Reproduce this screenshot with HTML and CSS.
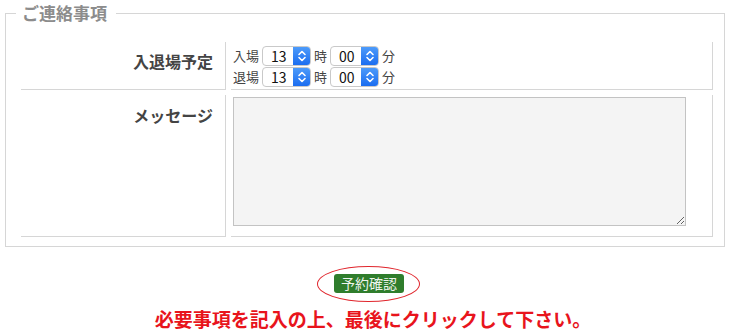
FILE: index.html
```html
<!DOCTYPE html>
<html lang="ja">
<head>
    <meta charset="UTF-8">
    <title>ご連絡事項</title>
    <link rel="stylesheet" href="styles.css">
</head>
<body>

    <fieldset class="contact">
        <legend>ご連絡事項</legend>
        <table class="form-table">
            <tr>
                <th class="mid">入退場予定</th>
                <td class="time-cell">
                    <div class="time-row">
                        <span>入場</span>
                        <span class="pick"><span class="pick-val">13</span><span class="pick-btn"><svg width="10" height="14" viewBox="0 0 10 14"><path d="M2 5.5 L5 2.5 L8 5.5 M2 8.5 L5 11.5 L8 8.5" fill="none" stroke="#fff" stroke-width="1.6" stroke-linecap="round" stroke-linejoin="round"/></svg></span></span>
                        <span>時</span>
                        <span class="pick"><span class="pick-val">00</span><span class="pick-btn"><svg width="10" height="14" viewBox="0 0 10 14"><path d="M2 5.5 L5 2.5 L8 5.5 M2 8.5 L5 11.5 L8 8.5" fill="none" stroke="#fff" stroke-width="1.6" stroke-linecap="round" stroke-linejoin="round"/></svg></span></span>
                        <span>分</span>
                    </div>
                    <div class="time-row">
                        <span>退場</span>
                        <span class="pick"><span class="pick-val">13</span><span class="pick-btn"><svg width="10" height="14" viewBox="0 0 10 14"><path d="M2 5.5 L5 2.5 L8 5.5 M2 8.5 L5 11.5 L8 8.5" fill="none" stroke="#fff" stroke-width="1.6" stroke-linecap="round" stroke-linejoin="round"/></svg></span></span>
                        <span>時</span>
                        <span class="pick"><span class="pick-val">00</span><span class="pick-btn"><svg width="10" height="14" viewBox="0 0 10 14"><path d="M2 5.5 L5 2.5 L8 5.5 M2 8.5 L5 11.5 L8 8.5" fill="none" stroke="#fff" stroke-width="1.6" stroke-linecap="round" stroke-linejoin="round"/></svg></span></span>
                        <span>分</span>
                    </div>
                </td>
            </tr>
            <tr>
                <th class="top">メッセージ</th>
                <td class="msg-cell"><textarea class="message"></textarea></td>
            </tr>
        </table>
    </fieldset>

    <div class="submit-area">
        <span class="ring"><button class="confirm">予約確認</button></span>
    </div>
    <p class="notice">必要事項を記入の上、最後にクリックして下さい。</p>

</body>
</html>
```

FILE: styles.css
```css
body {
    margin: 0;
    padding: 0 4px 0 5px;
    font-family: "Noto Sans CJK JP", sans-serif;
    color: #444;
    background: #fff;
}
.contact {
    margin: 0;
    padding: 0 6px 4px 10px;
    border: 1px solid #d6d6d6;
}
.contact legend {
    padding: 0 9px 0 6px;
    font-size: 17px;
    line-height: 26px;
    font-weight: bold;
    color: #8c8c8c;
}
.form-table {
    border-collapse: separate;
    border-spacing: 5px;
    margin-top: 11px;
}
.form-table th,
.form-table td {
    border-right: 1px solid #d6d6d6;
    border-bottom: 1px solid #d6d6d6;
}
.form-table th {
    width: 193px;
    padding: 0 12px 0 0;
    text-align: right;
    font-size: 16px;
    font-weight: bold;
    color: #444;
}
.form-table th.mid {
    vertical-align: middle;
    padding-bottom: 9px;
}
.form-table th.top {
    vertical-align: top;
    padding-top: 8px;
}
.time-cell {
    width: 478px;
    padding: 3px 0 2px 2px;
}
.time-row {
    display: flex;
    align-items: center;
    height: 21px;
    font-size: 13px;
}
.time-row > span {
    line-height: 20px;
}
.pick {
    display: flex;
    width: 49px;
    height: 20px;
    margin: 0 3px;
    box-sizing: border-box;
    border: 1px solid #c9c9c9;
    border-radius: 4px;
    background: #fff;
    overflow: hidden;
}
.pick-val {
    flex: 1;
    padding-left: 8px;
    font-size: 14px;
    line-height: 18px;
    color: #111;
}
.pick-btn {
    display: flex;
    align-items: center;
    justify-content: center;
    width: 17px;
    background: linear-gradient(#4d9bfa, #1b6df0);
}
.msg-cell {
    padding: 2px 26px 10px 2px;
}
.message {
    display: block;
    width: 453px;
    height: 129px;
    box-sizing: border-box;
    margin: 0;
    border: 1px solid #c3c3c3;
    background: #f4f4f4;
}
.submit-area {
    text-align: center;
    padding-left: 7px;
    margin-top: 19px;
}
.ring {
    display: inline-block;
    padding: 7px 15px 8px 16px;
    border: 1px solid #e0262d;
    border-radius: 50%;
}
.confirm {
    display: block;
    height: 19px;
    padding: 0 7px;
    border: none;
    border-radius: 3px;
    background: #2f7d2c;
    color: #eef4ee;
    font-family: "Noto Sans CJK JP", sans-serif;
    font-size: 14px;
    line-height: 19px;
}
.notice {
    margin: 4px 0 0;
    padding-left: 16px;
    text-align: center;
    font-size: 19px;
    line-height: 26px;
    font-weight: bold;
    color: #e8141c;
}
```
